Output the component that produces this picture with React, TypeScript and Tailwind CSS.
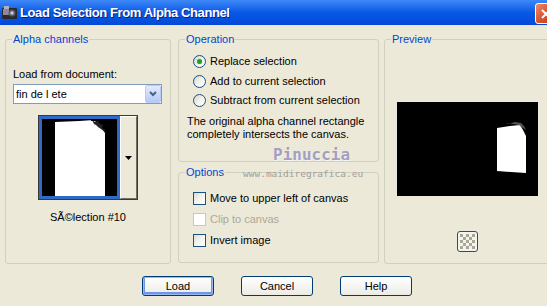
import React from "react";

const Radio = ({ checked, label }: { checked?: boolean; label: string }) => (
  <div className="flex items-center h-[19.5px] pl-[14px]">
    <span className="w-[13px] h-[13px] rounded-full border border-[#1c5180] bg-linear-to-br from-[#d4d4cc] via-[#f2f2ee] to-white flex items-center justify-center">
      {checked && <span className="w-[5px] h-[5px] rounded-full bg-[#21a121] shadow-[0_0_1px_#7fd67f]" />}
    </span>
    <span className="ml-[4px]">{label}</span>
  </div>
);

const Check = ({ label, disabled }: { label: string; disabled?: boolean }) => (
  <div className="flex items-center h-[21px] pl-[14px]">
    <span
      className={`w-[13px] h-[13px] border ${
        disabled
          ? "border-[#cac8bb] bg-white"
          : "border-[#1c5180] bg-linear-to-br from-[#dcdcd7] via-[#f3f3ef] to-white"
      }`}
    />
    <span className={`ml-[4px] ${disabled ? "text-[#aca899]" : ""}`}>{label}</span>
  </div>
);

const Group = ({
  title,
  className,
  children,
}: {
  title: string;
  className: string;
  children?: React.ReactNode;
}) => (
  <fieldset className={`border border-[#d0d0bf] rounded-[3px] p-0 m-0 min-w-0 shrink-0 ${className}`}>
    <legend className="ml-[6px] px-[1px] text-[#0046d5] leading-[13px]">{title}</legend>
    {children}
  </fieldset>
);

export default function App() {
  return (
    <div className="relative w-[547px] h-[306px] overflow-hidden bg-[#ece9d8] font-['Liberation_Sans',Arial,sans-serif] text-[11px] leading-[13px] text-black">
      {/* title bar */}
      <div className="h-[25px] flex items-center bg-linear-to-b from-[#3d88f7] via-[#0858e6] to-[#0449d6]">
        <svg width="15" height="14" viewBox="0 0 15 14" className="ml-[2px]">
          <rect x="0" y="2" width="15" height="11" rx="1" fill="#2a2a2a" />
          <rect x="1" y="3" width="6" height="6" fill="#8a8a9a" />
          <circle cx="10" cy="7" r="3.5" fill="#5a5a66" />
          <circle cx="10" cy="7" r="1.8" fill="#c8c8d2" />
          <rect x="2" y="0" width="5" height="3" fill="#b0b0bc" />
        </svg>
        <span className="ml-[3px] text-white font-bold text-[13px] tracking-[-0.4px] [text-shadow:1px_1px_#0a2080]">
          Load Selection From Alpha Channel
        </span>
      </div>
      <div className="absolute left-[535px] top-[3px] w-[21px] h-[21px] rounded-[3px] border border-white bg-linear-to-br from-[#e88a6c] via-[#d9542f] to-[#c13a17] flex items-center justify-center">
        <svg width="10" height="10" viewBox="0 0 10 10">
          <path d="M1 1L9 9M9 1L1 9" stroke="white" strokeWidth="2" />
        </svg>
      </div>

      {/* groups */}
      <div className="flex pt-[8px]">
        <Group title="Alpha channels" className="ml-[5px] w-[166px] h-[231px]">
          <div className="flex flex-col">
            <div className="mt-[22px] ml-[7px]">Load from document:</div>
            <div className="mt-[3px] ml-[7px] w-[149px] h-[20px] border border-[#7f9db9] bg-white flex items-center">
              <span className="ml-[2px] flex-1">fin de l ete</span>
              <span className="w-[16px] h-[18px] rounded-[2px] border border-[#b9cbf3] bg-linear-to-b from-[#e2ebfd] to-[#b5c9f7] flex items-center justify-center">
                <svg width="8" height="6" viewBox="0 0 8 6">
                  <path d="M1 1L4 4L7 1" stroke="#4d6185" strokeWidth="2" fill="none" />
                </svg>
              </span>
            </div>
            <div className="mt-[11px] mx-auto flex w-[100px] h-[85px] border border-[#3a3a3a]">
              <div className="w-[81px] h-full border-[3px] border-[#316ac5] bg-black">
                <svg width="75" height="77" viewBox="0 0 75 77">
                  <path d="M13 3 L37 2 L52 1 L57 6 L63 14 L63 77 L13 77 Z" fill="white" />
                  <path d="M50 1 L53 3 L56 2 L58 5 L61 6 L60 9 L63 11 L64 14 L62 12 L59 10 L56 8 L54 6 L52 5 Z" fill="#222" />
                  <rect x="49" y="0" width="15" height="2" fill="black" />
                </svg>
              </div>
              <div className="flex-1 border-l border-t border-white border-r border-b border-r-[#716f64] border-b-[#716f64] bg-[#ece9d8] flex items-center justify-center">
                <svg width="7" height="4" viewBox="0 0 7 4">
                  <path d="M0 0H7L3.5 4Z" fill="black" />
                </svg>
              </div>
            </div>
            <div className="mt-[11px] text-center">SÃ©lection #10</div>
          </div>
        </Group>

        <div className="ml-[7px] w-[201px] shrink-0 flex flex-col">
          <Group title="Operation" className="h-[129px]">
            <div className="flex flex-col">
              <div className="mt-[6px]">
                <Radio checked label="Replace selection" />
                <Radio label="Add to current selection" />
                <Radio label="Subtract from current selection" />
              </div>
              <div className="mt-[4px] ml-[8px]">
                The original alpha channel rectangle
                <br />
                completely intersects the canvas.
              </div>
            </div>
          </Group>
          <Group title="Options" className="mt-[4px] h-[97px]">
            <div className="mt-[9px]">
              <Check label="Move to upper left of canvas" />
              <Check disabled label="Clip to canvas" />
              <Check label="Invert image" />
            </div>
          </Group>
        </div>

        <Group title="Preview" className="ml-[5px] w-[167px] h-[231px]">
          <div className="flex flex-col items-center">
            <div className="mt-[56px] w-[141px] h-[94px] bg-black">
              <svg width="141" height="94" viewBox="0 0 141 94">
                <path d="M100 26 L113 24 L123 23 L126 28 L129 34 L129 71 L114 70 L100 69 Z" fill="white" />
                <path d="M108 21 L112 22 L118 20 L124 21 L127 24 L129 28 L126 26 L122 23 L116 22 Z" fill="#555" />
              </svg>
            </div>
            <div className="mt-[35px] w-[21px] h-[21px] rounded-[3px] border border-[#1c5180] bg-[#f4f3ee] flex items-center justify-center">
              <svg width="15" height="15" viewBox="0 0 15 15">
                {[0, 1, 2, 3, 4].map((r) =>
                  [0, 1, 2, 3, 4].map((c) =>
                    (r + c) % 2 === 0 ? (
                      <rect key={`${r}-${c}`} x={c * 3} y={r * 3} width="3" height="3" fill="#a9a796" />
                    ) : null
                  )
                )}
              </svg>
            </div>
          </div>
        </Group>
      </div>

      {/* buttons */}
      <div className="flex mt-[12px] ml-[142px] gap-[27px]">
        <button className="w-[72px] h-[20px] rounded-[3px] border border-[#003c74] bg-linear-to-b from-white to-[#ecebe6] shadow-[inset_0_0_0_1px_#9ab7f0,inset_0_-1px_0_2px_#6e95e6]">
          Load
        </button>
        <button className="w-[72px] h-[20px] rounded-[3px] border border-[#003c74] bg-linear-to-b from-white to-[#ecebe6]">
          Cancel
        </button>
        <button className="w-[72px] h-[20px] rounded-[3px] border border-[#003c74] bg-linear-to-b from-white to-[#ecebe6]">
          Help
        </button>
      </div>

      {/* watermark */}
      <div className="absolute left-[273px] top-[145px] font-['DejaVu_Sans_Mono',monospace] font-bold text-[16px] leading-[20px] text-[#a3a0bd] [text-shadow:1px_1px_#f4f4fa] pointer-events-none">
        Pinuccia
      </div>
      <div className="absolute left-[243px] top-[168px] font-['DejaVu_Sans_Mono',monospace] text-[9.5px] leading-[11px] text-[#a09f9a] pointer-events-none">
        www.maidiregrafica.eu
      </div>
    </div>
  );
}
